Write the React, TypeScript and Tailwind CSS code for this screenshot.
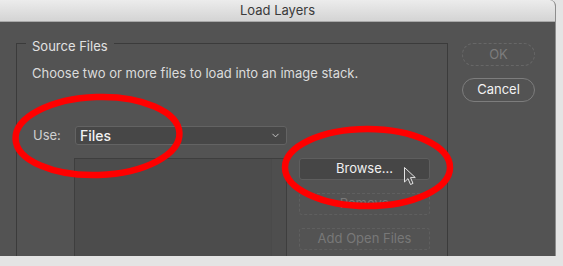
import { ChevronDown } from 'lucide-react'

export default function App() {
  return (
    <div className="relative w-[563px] h-[266px] overflow-hidden bg-[#e4e4e4] font-['Inter','Noto_Sans',sans-serif] text-[13px]">
      <div className="w-[556px] h-[256px] flex flex-col overflow-hidden rounded-tr-[6px] border-r border-[#8d8d8d] bg-[#535353]">
        {/* title bar */}
        <div className="h-[22px] shrink-0 flex items-center justify-center border-b border-[#a8a8a8] bg-gradient-to-b from-[#ececec] to-[#d4d4d4] text-[#3a3a3a]">
          Load Layers
        </div>

        <div className="flex flex-1 min-h-0">
          <fieldset className="ml-4 mt-[10px] w-[432px] h-[300px] shrink-0 border border-[#3b3b3b]">
            <legend className="ml-[9px] px-[6px] pt-[6px] leading-4 text-[#e2e2e2]">Source Files</legend>

            <p className="mt-[11px] pl-[15px] leading-4 text-[#dcdcdc]">
              Choose two or more files to load into an image stack.
            </p>

            <div className="mt-[45px] flex items-center pl-4">
              <span className="w-[42px] text-[#d0d0d0]">Use:</span>
              <div className="w-[212px] h-[19px] flex items-center justify-between rounded-[3px] border border-[#636363] bg-[#474747] pl-[4px] pr-[5px]">
                <span className="text-[14px] font-medium text-[#f2f2f2]">Files</span>
                <ChevronDown className="w-[11px] h-[11px] text-[#cfcfcf]" strokeWidth={2} />
              </div>
            </div>

            <div className="mt-[12px] flex pl-[57px]">
              <div className="w-[213px] h-[120px] flex border border-[#3e3e3e] bg-[#4c4c4c]">
                <div className="flex-1" />
                <div className="w-[15px] bg-[#4e4e4e] border-l border-[#4a4a4a]" />
              </div>

              <div className="ml-[12px] w-[131px] flex flex-col gap-[13px]">
                <div className="h-[22px] flex items-center justify-center rounded-[3px] border border-[#5e5e5e] bg-[#464646] text-[#f0f0f0]">
                  Browse...
                </div>
                <div className="h-[22px] flex items-center justify-center rounded-[3px] border border-dashed border-[#5f5f5f] text-[#787878]">
                  Remove
                </div>
                <div className="h-[22px] flex items-center justify-center rounded-[3px] border border-dashed border-[#5f5f5f] text-[#787878]">
                  Add Open Files
                </div>
              </div>
            </div>
          </fieldset>

          <div className="ml-[14px] mt-[21px] w-[73px] flex flex-col gap-[12px]">
            <div className="h-[23px] flex items-center justify-center rounded-full border border-dashed border-[#676767] text-[#7c7c7c]">
              OK
            </div>
            <div className="h-[24px] flex items-center justify-center rounded-full border border-[#7d7d7d] text-[#f2f2f2]">
              Cancel
            </div>
          </div>
        </div>
      </div>

      {/* annotation overlay */}
      <svg className="absolute inset-0 pointer-events-none" width="563" height="266" viewBox="0 0 563 266">
        <ellipse cx="97.5" cy="136" rx="82" ry="39" transform="rotate(-2 97.5 136)" fill="none" stroke="#ff0000" strokeWidth="6.5" />
        <ellipse cx="367.5" cy="167.5" rx="82.5" ry="38.5" fill="none" stroke="#ff0000" strokeWidth="6.5" />
        <path
          d="M404.5 167.5 L404.5 182 L408 178.6 L410.5 184.5 L413 183.4 L410.5 177.6 L415.3 177.6 Z"
          fill="#505050"
          stroke="#e4e4e4"
          strokeWidth="1"
          strokeLinejoin="round"
        />
      </svg>
    </div>
  )
}
